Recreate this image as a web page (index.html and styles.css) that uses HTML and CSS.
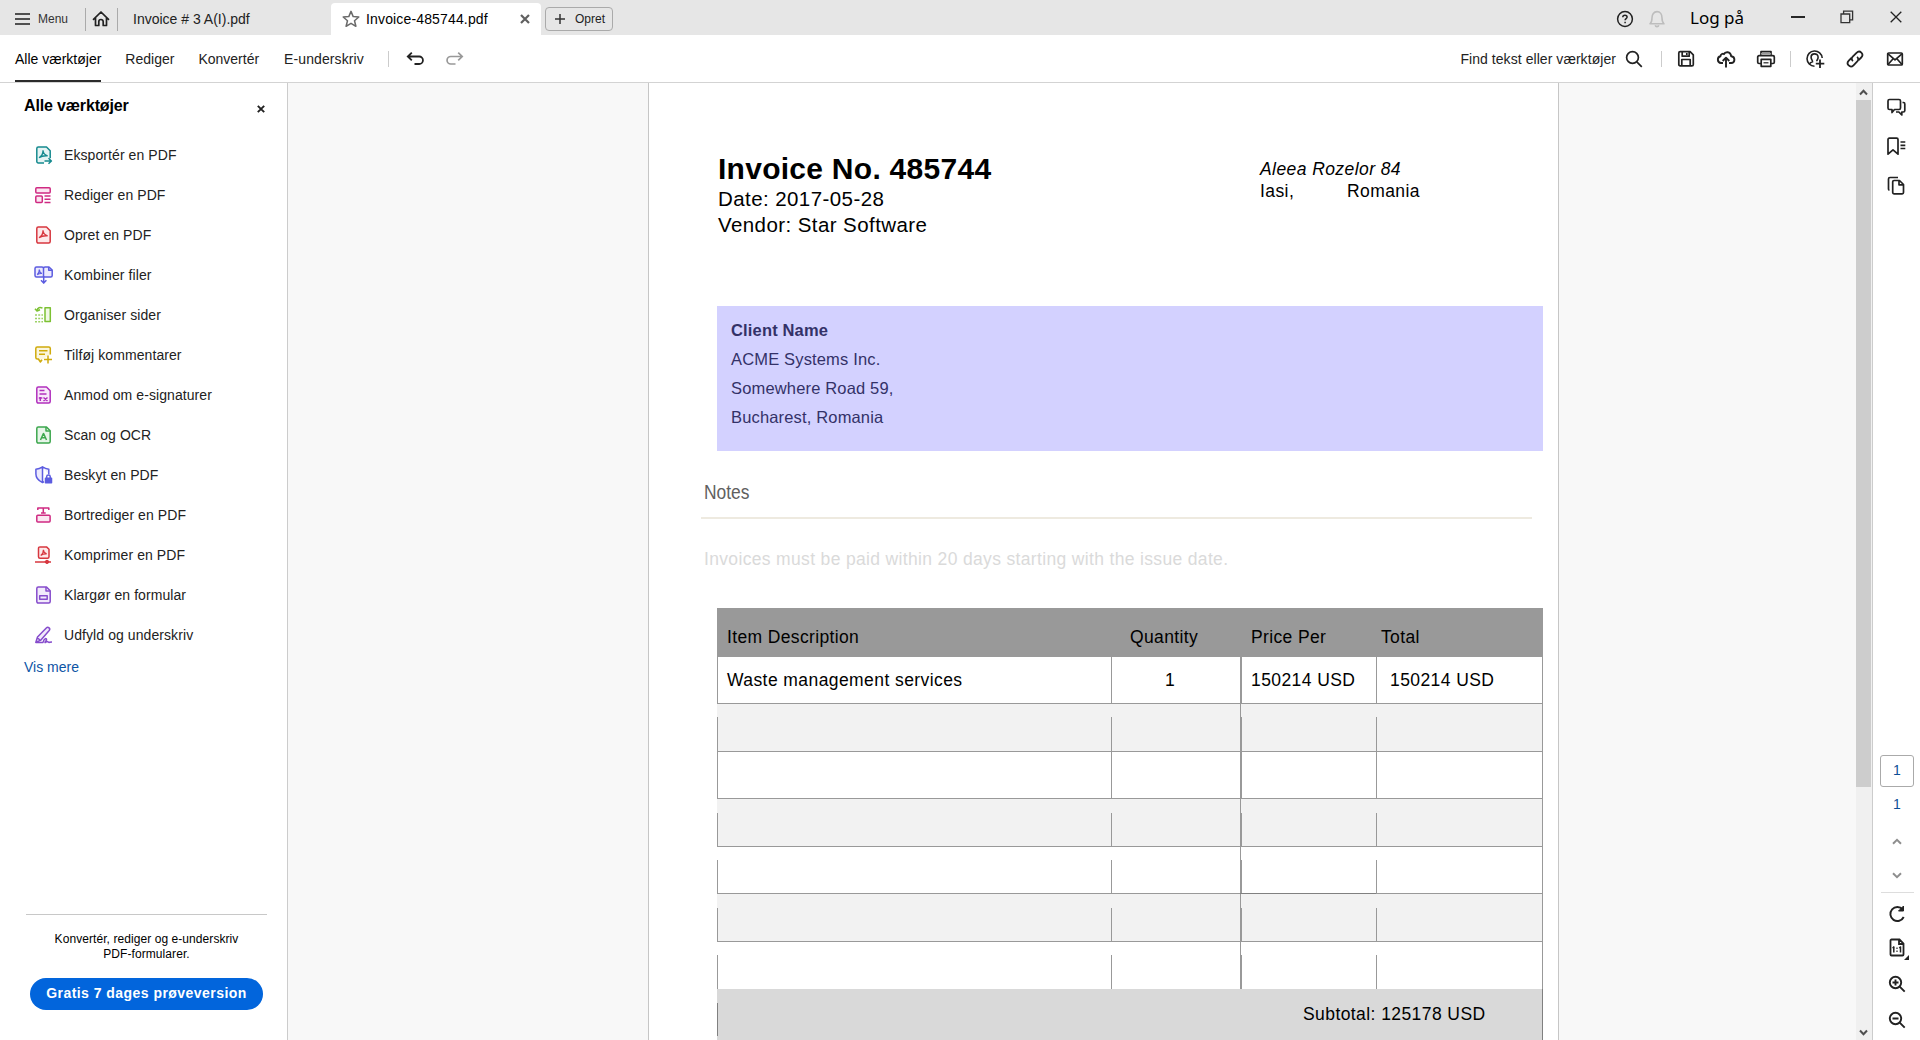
FILE: index.html
```html
<!DOCTYPE html>
<html lang="da">
<head>
<meta charset="utf-8">
<title>Invoice-485744.pdf</title>
<link rel="stylesheet" href="styles.css">
</head>
<body>
<svg class="defs" width="0" height="0" aria-hidden="true">
  <symbol id="doc" viewBox="0 0 18 18"><path d="M3.3.9h8.2l3.7 3.8v10.9a1.5 1.5 0 0 1-1.5 1.5H3.3a1.5 1.5 0 0 1-1.5-1.5V2.4A1.5 1.5 0 0 1 3.3.9z"/></symbol>
  <symbol id="acro" viewBox="0 0 18 18"><path fill="none" stroke-width="1.300" d="M8 4.200c.2 3.200 1.800 4.900 4.700 5.600M4 11.700C6.800 10 8.200 7.800 8 4.200M4 11.700c2.500-1.700 5.200-2.200 8.700-1.900"/></symbol>
</svg>
<div class="app">
  <header class="titlebar">
    <button class="menu"><svg width="15" height="12" viewBox="0 0 15 12"><path d="M0 1h15M0 6h15M0 11h15" stroke="#505050" stroke-width="1.800"/></svg>Menu</button>
    <span class="bar"></span>
    <svg class="home" width="18" height="18" viewBox="0 0 18 18" fill="none" stroke="#222" stroke-width="1.700" stroke-linejoin="round" stroke-linecap="round"><path d="M1.500 9.300 9 2l7.500 7.300M3.500 8v7.500h3.300v-3.800a2.200 2.200 0 0 1 4.400 0v3.800h3.300V8"/></svg>
    <span class="bar"></span>
    <div class="tab">Invoice # 3 A(I).pdf</div>
    <div class="tab active">
      <svg width="18" height="18" viewBox="0 0 18 18" fill="none" stroke="#6a6a6a" stroke-width="1.500" stroke-linejoin="round"><path d="m9 1.400 2.200 5.200 5.600.4-4.300 3.700 1.400 5.600L9 13.300l-4.900 3 1.400-5.600L1.200 7l5.600-.4z"/></svg>
      <span>Invoice-485744.pdf</span>
      <svg class="close" width="10" height="10" viewBox="0 0 10 10"><path d="m1 1 8 8M9 1 1 9" stroke="#606060" stroke-width="2.200"/></svg>
    </div>
    <button class="create"><svg width="10" height="10" viewBox="0 0 10 10"><path d="M5 0v10M0 5h10" stroke="#333" stroke-width="1.500"/></svg>Opret</button>
    <div class="window">
      <svg width="18" height="18" viewBox="0 0 18 18" fill="none" stroke="#222" stroke-width="1.500"><circle cx="9" cy="9" r="7.400"/><path d="M6.800 7.200c0-2.600 4.300-2.500 4.300-.1 0 1.500-2 1.500-2 3.200M9.100 11.700v1.600"/></svg>
      <svg class="bell" width="18" height="18" viewBox="0 0 18 18" fill="none" stroke="#bdbdbd" stroke-width="1.600" stroke-linejoin="round"><path d="M2 13.800c1.600-1.200 2-2.500 2-6C4 4.500 5.800 1.600 9 1.600s5 2.900 5 6.200c0 3.500.4 4.800 2 6z"/><path d="M7.200 15.300c.5 1.800 3.100 1.800 3.600 0"/></svg>
      <span class="login">Log på</span>
      <svg class="min" width="14" height="14" viewBox="0 0 14 14"><path d="M0 7h14" stroke="#111" stroke-width="1.800"/></svg>
      <svg class="restore" width="14" height="14" viewBox="0 0 14 14" fill="none" stroke="#333" stroke-width="1.300"><path d="M1 4h8.700v8.700H1zM3.600 4V1.200h9v8.700H9.700"/></svg>
      <svg width="12" height="12" viewBox="0 0 12 12"><path d="m.7.7 10.600 10.600M11.300.7.7 11.300" stroke="#222" stroke-width="1.300"/></svg>
    </div>
  </header>

  <nav class="toolbar">
    <a class="current">Alle værktøjer</a><a>Rediger</a><a>Konvertér</a><a class="sign">E-underskriv</a>
    <span class="sep"></span>
    <svg class="undo" width="18" height="14" viewBox="0 0 18 14" fill="none" stroke="#222" stroke-width="1.800"><path d="M2 4.500h11.200a3.700 3.700 0 0 1 0 7.500H8.500M5.800.7 1.800 4.500l4 3.800"/></svg>
    <svg class="redo" width="18" height="14" viewBox="0 0 18 14" fill="none" stroke="#999" stroke-width="1.700"><path d="M16 4.500H4.800a3.700 3.700 0 0 0 0 7.500h4.700M12.200.7l4 3.800-4 3.800"/></svg>
    <div class="actions">
      <span class="find">Find tekst eller værktøjer</span>
      <svg class="search" width="18" height="18" viewBox="0 0 18 18" fill="none" stroke="#222" stroke-width="1.700"><circle cx="7.500" cy="7.500" r="5.900"/><path d="m11.800 11.800 5 5"/></svg>
      <span class="sep"></span>
      <i><svg width="18" height="18" viewBox="0 0 18 18" fill="none" stroke="#222" stroke-width="1.700" stroke-linejoin="round"><path d="M1.800 3.100c0-.8.6-1.400 1.400-1.400h9.900l3.200 3.100v9.600c0 .8-.6 1.400-1.400 1.400H3.200c-.8 0-1.400-.6-1.400-1.400zM5.200 2v4.200h7V2M4.800 15.500v-6h8.400v6M9.800 3v2"/></svg></i>
      <i><svg width="20" height="18" viewBox="0 0 20 18" fill="none" stroke="#222" stroke-width="1.900" stroke-linejoin="round"><path d="M7 13H5a3.400 3.400 0 0 1-.5-6.700C4.600 4 7 3.200 8 4.200 9 1.600 14.500.8 15.200 6.300c4.300.4 4.200 6.700 0 6.700H13M10 17.500V8M6.700 11 10 7.700l3.300 3.300"/></svg></i>
      <i><svg width="20" height="18" viewBox="0 0 20 18" fill="none" stroke="#222" stroke-width="1.700" stroke-linejoin="round"><path d="M5 13.500H3a1.300 1.300 0 0 1-1.300-1.300V7A1.300 1.300 0 0 1 3 5.700h14A1.300 1.300 0 0 1 18.300 7v5.200a1.300 1.300 0 0 1-1.300 1.300h-2M5 5.500V1.700h10v3.800M5.200 9.300h9.600v7H5.200z"/><path d="M7.500 12.800h5" stroke-width="1.200"/><path d="M5 3.800h10" stroke="#999"/></svg></i>
      <span class="sep"></span>
      <i><svg width="20" height="20" viewBox="0 0 20 20" fill="none" stroke="#222" stroke-width="1.600"><path d="M9.500 17.200A7.600 7.600 0 1 1 17.200 9"/><path d="M4.500 15.300c.4-1.600 1.500-2.100 3-2.500.2-1.700-1.400-2.200-1.400-4.600 0-4.500 7-4.500 7 0 0 2.300-1.300 2.600-1.300 4"/><path d="M15 10.500v8.500M10.800 14.700h8.500" stroke-width="1.800"/></svg></i>
      <i><svg width="18" height="18" viewBox="0 0 18 18" fill="none" stroke="#222" stroke-width="1.800"><path d="M6.900 11.200c-1.600-1.500-1.400-3.300-.2-4.500l3.800-3.900c3.300-3.300 8 1.300 4.700 4.700l-2.600 2.600"/><path d="M11.100 6.900c1.600 1.500 1.400 3.300.2 4.500l-3.800 3.900c-3.300 3.300-8-1.300-4.700-4.700l2.600-2.600"/></svg></i>
      <i><svg width="18" height="16" viewBox="0 0 18 16" fill="none" stroke="#222" stroke-width="1.700" stroke-linejoin="round"><rect x="1.700" y="2" width="14.600" height="12" rx="1"/><path d="m2 2.800 7 6 7-6M2 13.500l4.900-5.500M16 13.500l-4.900-5.500"/></svg></i>
    </div>
  </nav>

  <main class="workspace">
    <aside class="sidebar">
      <div class="side-head"><h2>Alle værktøjer</h2><svg width="8" height="8" viewBox="0 0 8 8"><path d="m.8.8 6.400 6.400M7.200.8.8 7.200" stroke="#222" stroke-width="1.900"/></svg></div>
      <ul class="tools">
        <li class="teal"><svg viewBox="0 0 18 18"><path d="M9 17H3.300a1.500 1.500 0 0 1-1.500-1.500V2.400A1.500 1.500 0 0 1 3.300.9h8.200l3.700 3.800v7.500"/><use href="#acro"/><path class="n" d="M9.500 15h6.500M13.500 12.300l2.900 2.700-2.900 2.700"/></svg>Eksportér en PDF</li>
        <li class="pink"><svg viewBox="0 0 18 18"><rect x=".8" y="1.700" width="14.400" height="5.300" rx="1"/><rect x=".8" y="10" width="6.500" height="6.500" rx="1"/><path class="n" d="M9.500 10h6M9.500 13.200h6M9.500 16.400h6"/></svg>Rediger en PDF</li>
        <li class="red"><svg viewBox="0 0 18 18"><use href="#doc"/><use href="#acro"/></svg>Opret en PDF</li>
        <li class="blue"><svg viewBox="0 0 18 18"><path d="M8.500 11V2.500c0-1-.5-1.500-1.500-1.500H1.500C.5 1 0 1.500 0 2.500v7c0 1 .5 1.500 1.500 1.500zM8.500 11V2.500C8.500 1.500 9 1 10 1h4l3.200 3v5.500c0 1-.5 1.500-1.500 1.500z"/><path class="n" d="M13.700 1v3.300H17M8.700 10v7M6 14.300l2.700 2.800 2.700-2.800"/><path class="n thin" d="M4.300 3.500c.1 2.500 1.200 3.500 2.700 4M2.200 8.700c1.500-1.200 2.200-3 2.100-5.200M2.200 8.700c1.300-.9 2.800-1.300 4.800-1.200"/></svg>Kombiner filer</li>
        <li class="green"><svg viewBox="0 0 18 18"><rect x="10" y="1.800" width="5.300" height="13.700"/><path class="n" d="M7.500 2.200C5 .8 2.500 1.500 2 4.500M0 2.700 2 5l3-1.200"/><path class="n" stroke-dasharray="2 1.200" opacity=".75" d="M0 9h8M0 12.500h8M0 15.800h8"/></svg>Organiser sider</li>
        <li class="gold"><svg viewBox="0 0 18 18"><path d="M7 13.800 5.400 16l-2-3H2.300C1.300 13 .8 12.500.8 11.500v-9c0-1 .5-1.500 1.500-1.500h11.500c1 0 1.500.5 1.500 1.500v6"/><path class="n" d="M4 4.800h8.500M4 8.300h6M13 9.500v8M9 13.500h8"/></svg>Tilføj kommentarer</li>
        <li class="purple"><svg viewBox="0 0 18 18"><use href="#doc"/><path class="n" d="M4.500 4.500h5M4.500 8h7M5.300 11v4M8.500 11.500l4 3.500M12.500 11.500l-4 3.500M3.800 12h3.500"/></svg>Anmod om e-signaturer</li>
        <li class="forest"><svg viewBox="0 0 18 18"><use href="#doc"/><path class="n" d="M11 1v4h4M5.500 14 8.400 7.500h.2l2.900 6.500M6.500 11.700h4"/></svg>Scan og OCR</li>
        <li class="blue"><svg viewBox="0 0 18 18"><path d="M7.500.9c2 1.300 4 2 6.300 2.300v5M9 15.700l-1.500.9C3 14.500.9 11.500.9 8V3.200C3.300 3 5.500 2.200 7.500.9v15.700"/><path class="solid" d="M10.500 12.200h6v4.600h-6z"/><path class="n" d="M11.700 12v-1.500c0-1.900 3.500-1.900 3.500 0V12"/></svg>Beskyt en PDF</li>
        <li class="pink"><svg viewBox="0 0 18 18"><rect x="1.800" y="9.300" width="13.300" height="6.800" rx="1"/><path class="n" d="M2.800 4V2h11v2M8.300 2v5M6 7h4.700"/></svg>Bortrediger en PDF</li>
        <li class="red"><svg viewBox="0 0 18 18"><path d="M5 .9h6.500L14 3.300v7.500c0 1-.5 1.500-1.500 1.500H5c-1 0-1.500-.5-1.500-1.500V2.400C3.500 1.400 4 .9 5 .9z"/><path class="n thin" d="M8.400 3.700c.1 2.400 1.300 3.600 3.300 4.200M5.700 9.400c1.900-1.200 2.800-3 2.700-5.700M5.700 9.400c1.700-1.200 3.500-1.600 6-1.500"/><path class="n" d="M0 15.900h16M12 14.300l-2 1.600 2 1.600M12 14.300l2 1.600-2 1.600"/></svg>Komprimer en PDF</li>
        <li class="violet"><svg viewBox="0 0 18 18"><use href="#doc"/><path class="n" d="M11 1v4h4M4.700 9.700h7.500v3.600H4.700z"/></svg>Klargør en formular</li>
        <li class="violet"><svg viewBox="0 0 18 18"><path d="M.8 16.400 2.500 11 11.300 2c1.800-1.800 4.500.5 2.900 2.500l-8.500 9.800zM2 11.500l3.500 3"/><path class="n" d="M1 16.400h7c1-4.500 4-4.500 3.500-2.500-.2 1-1.700 2-1.500 2.500s2-.9 2.500-.9 1 .9 1.500.9 1-.5 3-.5"/></svg>Udfyld og underskriv</li>
      </ul>
      <a class="more">Vis mere</a>
      <div class="promo">
        <p>Konvertér, rediger og e-underskriv<br>PDF-formularer.</p>
        <button>Gratis 7 dages prøveversion</button>
      </div>
    </aside>

    <section class="viewer">
      <article class="page">
        <div class="head">
          <div class="title"><h1>Invoice No. 485744</h1><p>Date: 2017-05-28</p><p>Vendor: Star Software</p></div>
          <address><em>Aleea Rozelor 84</em><div><span>Iasi,</span><span>Romania</span></div></address>
        </div>
        <div class="client"><b>Client Name</b><span>ACME Systems Inc.</span><span>Somewhere Road 59,</span><span>Bucharest, Romania</span></div>
        <h3 class="notes"><span>Notes</span></h3>
        <p class="terms">Invoices must be paid within 20 days starting with the issue date.</p>
        <div class="items">
          <div class="row th"><span>Item Description</span><span>Quantity</span><span>Price Per</span><span>Total</span></div>
          <div class="row first"><span>Waste management services</span><span>1</span><span>150214 USD</span><span>150214 USD</span></div>
          <div class="row tall shade gap"><span></span><span></span><span></span><span></span></div>
          <div class="row"><span></span><span></span><span></span><span></span></div>
          <div class="row tall shade gap deep"><span></span><span></span><span></span><span></span></div>
          <div class="row gap"><span></span><span></span><span class="dark"></span><span></span></div>
          <div class="row tall shade gap deep"><span></span><span></span><span></span><span></span></div>
          <div class="row gap last"><span></span><span></span><span></span><span></span></div>
          <div class="subtotal">Subtotal: 125178 USD</div>
        </div>
      </article>
      <div class="scroll">
        <svg width="9" height="7" viewBox="0 0 9 7"><path d="m1 5.500 3.500-3.700L8 5.500" fill="none" stroke="#505050" stroke-width="2"/></svg>
        <span class="thumb"></span>
        <svg class="down" width="9" height="7" viewBox="0 0 9 7"><path d="m1 1.500 3.500 3.700L8 1.500" fill="none" stroke="#505050" stroke-width="2"/></svg>
      </div>
    </section>

    <aside class="rail">
      <div class="panels">
        <svg width="19" height="19" viewBox="0 0 19 19" fill="none" stroke="#222" stroke-width="1.700" stroke-linejoin="round"><path d="M2.500 1.500h9.500c1 0 1.500.5 1.500 1.500v7c0 1-.5 1.500-1.500 1.500H7.500L5 14.500v-3H2.500C1.500 11.500 1 11 1 10V3c0-1 .5-1.500 1.500-1.500z"/><path d="M15.500 4.500h1c1 0 1.300.5 1.300 1.500v6.500c0 1-.5 1.500-1.500 1.500h-1.500v3l-2.900-3H9"/></svg>
        <svg width="19" height="19" viewBox="0 0 19 19" fill="none" stroke="#222" stroke-width="1.700" stroke-linejoin="round"><path d="M1 2.500C1 1.700 1.500 1.200 2.300 1.200h7.400c.8 0 1.300.5 1.300 1.300v14.700L6 12.800l-5 4.400zM13.500 5h4.800M13.500 8.300h4.800M13.500 11.500h4.800"/></svg>
        <svg width="19" height="19" viewBox="0 0 19 19" fill="none" stroke="#222" stroke-width="1.700" stroke-linejoin="round"><path d="M2.500 14C1.800 14 1.500 13.500 1.500 12.800V3c0-1 .5-1.500 1.500-1.500h8M7 4.500h5.500l4 4v8c0 .8-.4 1.300-1.300 1.300H7c-.9 0-1.300-.5-1.300-1.300V5.800C5.700 5 6.100 4.500 7 4.500zM12 4.800v4h4.300"/></svg>
      </div>
      <div class="nav">
        <span class="pageno box">1</span>
        <span class="pageno">1</span>
        <svg class="up" width="10" height="7" viewBox="0 0 10 7"><path d="M1 5.700 5 1.800l4 3.900" fill="none" stroke="#8e8e8e" stroke-width="2"/></svg>
        <svg class="dn" width="10" height="7" viewBox="0 0 10 7"><path d="m1 1.300 4 3.900 4-3.900" fill="none" stroke="#8e8e8e" stroke-width="2"/></svg>
        <hr>
        <svg width="18" height="18" viewBox="0 0 18 18" fill="none" stroke="#222" stroke-width="1.900"><path d="M14.700 4.500A7 7 0 1 0 15.700 12"/><path d="M15.500 1v5h-5z" fill="#222" stroke-width="1"/></svg>
        <svg class="fit" width="20" height="22" viewBox="0 0 20 22" fill="none" stroke="#222" stroke-width="1.800"><path d="M2.500 1.500h8l4 4v11a1 1 0 0 1-1 1h-11a1 1 0 0 1-1-1v-14a1 1 0 0 1 1-1zM10 2v4h4"/><path d="M4.800 8.500v6M11.500 8.500v6" stroke-width="1.500"/><path d="M3.500 10 5 8.800M10.200 10l1.500-1.200M8 9.500v1.500M8 12.500V14" stroke-width="1.200"/><path d="M20 17v5h-5z" fill="#222" stroke="none"/></svg>
        <svg width="18" height="18" viewBox="0 0 18 18" fill="none" stroke="#222" stroke-width="1.900"><circle cx="7.500" cy="7.500" r="5.700"/><path d="m11.700 11.700 5 5M7.500 4.500v6M4.500 7.500h6"/></svg>
        <svg width="18" height="18" viewBox="0 0 18 18" fill="none" stroke="#222" stroke-width="1.900"><circle cx="7.500" cy="7.500" r="5.700"/><path d="m11.700 11.700 5 5M4.500 7.500h6"/></svg>
      </div>
    </aside>
  </main>
</div>
</body>
</html>
```

FILE: styles.css
```css
* { box-sizing: border-box; margin: 0; padding: 0; }
body { font: 14px/20px "Liberation Sans", Arial, sans-serif; color: #222; background: #fff; overflow: hidden; }
.defs { position: absolute; }
svg { display: block; flex: none; }
button { font: inherit; color: inherit; border: 0; background: none; }
ul { list-style: none; }
.app { width: 1920px; height: 1040px; display: flex; flex-direction: column; overflow: hidden; white-space: nowrap; }

/* Title bar */
.titlebar { height: 35px; flex: none; background: #e6e6e6; display: flex; align-items: center; padding: 3px 18px 0 15px; }
.menu { display: flex; align-items: center; gap: 8px; width: 70px; font-size: 12px; color: #333; }
.bar { width: 1px; height: 23px; background: #aaa; }
.home { margin: 0 7px 0 6px; }
.tab { width: 213px; height: 32px; padding-left: 15px; line-height: 32px; }
.tab.active { width: 210px; background: #fff; border-radius: 4px 4px 0 0; display: flex; align-items: center; padding-left: 11px; color: #000; letter-spacing: .15px; }
.tab.active span { margin-left: 6px; width: 154px; }
.create { display: flex; align-items: center; gap: 10px; margin-left: 4px; width: 68px; height: 24px; padding-left: 9px; border: 1px solid #aaa; border-radius: 4px; font-size: 12px; }
.window { margin-left: auto; display: flex; align-items: center; }
.bell { margin-left: 14px; }
.login { margin: -2px 46px 0 24px; width: 55px; font: 17px/24px "Noto Sans", sans-serif; color: #000; }
.min { margin-top: -5px; }
.restore { margin: -4px 36px 0 35px; }
.window > svg:last-child { margin-top: -4px; }

/* Toolbar */
.toolbar { height: 48px; flex: none; display: flex; align-items: center; border-bottom: 1px solid #d3d3d3; padding: 0 5px 0 15px; }
.toolbar a { height: 47px; line-height: 48px; margin-right: 24px; }
.toolbar a.current { border-bottom: 2px solid #2b2b2b; color: #000; }
.toolbar a.sign { margin-left: 1px; letter-spacing: .1px; }
.sep { width: 1px; height: 16px; background: #ccc; }
.undo { margin-left: 17px; }
.redo { margin-left: 22px; }
.actions { margin-left: auto; display: flex; align-items: center; }
.find { letter-spacing: .06px; }
.search { margin: 1px 14px 0 9px; }
.actions i { width: 40px; display: flex; justify-content: center; }
.actions .sep { margin: 0 4px; }

/* Left panel */
.workspace { flex: 1; min-height: 0; display: flex; }
.sidebar { width: 288px; border-right: 1px solid #ccc; display: flex; flex-direction: column; }
.side-head { display: flex; justify-content: space-between; padding: 13px 22px 0 24px; height: 52px; }
.side-head h2 { font-size: 16px; line-height: 20px; letter-spacing: -.15px; color: #000; }
.side-head svg { margin-top: 9px; }
.tools { padding-left: 35px; }
.tools li { height: 40px; display: flex; align-items: center; gap: 11px; letter-spacing: .08px; }
.tools svg { width: 18px; height: 18px; fill: var(--f); stroke: var(--c); stroke-width: 1.5; stroke-linejoin: round; overflow: visible; }
.tools .n { fill: none; }
.tools .thin { stroke-width: 1.2; }
.tools .solid { fill: var(--c); }
.teal { --c: #168a8f; --f: #e6f4f4; }
.pink { --c: #cf2a82; --f: #fbe6f1; }
.red { --c: #d7373f; --f: #fde9ea; }
.blue { --c: #5c5ce0; --f: #eceafd; }
.green { --c: #7cc133; --f: #f1f9e6; }
.gold { --c: #d0ab0c; --f: #fbf6df; }
.purple { --c: #b130bd; --f: #f8e8fa; }
.forest { --c: #3da74e; --f: #e7f5e9; }
.violet { --c: #864ccc; --f: #f1eafb; }
.more { margin: 2px 0 0 24px; color: #0d55a5; }
.promo { margin: auto 20px 0 26px; height: 126px; border-top: 1px solid #c8c8c8; padding-top: 17px; text-align: center; }
.promo p { font-size: 12px; line-height: 15px; color: #000; letter-spacing: .07px; }
.promo button { margin-top: 16px; width: 233px; height: 32px; border-radius: 16px; background: #0265dc; color: #fff; font-weight: bold; letter-spacing: .46px; line-height: 30px; padding-bottom: 2px; }

/* Document */
.viewer { flex: 1; background: #f8f8f8; display: flex; overflow: hidden; }
.page { margin-left: 360px; width: 911px; background: #fff; border: solid #c6c6c6; border-width: 0 1px; padding: 68px 15px 0 52px; font-size: 17.5px; line-height: 22px; letter-spacing: .42px; color: #000; }
.head { height: 155px; display: flex; padding-left: 17px; }
.title { width: 542px; font-size: 20.5px; line-height: 26px; }
.title h1 { font-size: 30px; line-height: 35px; letter-spacing: .27px; }
address { font-style: normal; padding-top: 7px; }
address em { display: block; }
address div { display: grid; grid-template-columns: 87px auto; }
.client { margin-left: 16px; height: 145px; background: #d3d1ff; color: #333168; padding: 10px 14px; display: flex; flex-direction: column; font-size: 16.5px; line-height: 29px; letter-spacing: .16px; }
.notes { margin: 29px 11px 0 0; padding-left: 3px; height: 39px; border-bottom: 2px solid #eeeae0; font-size: 20px; line-height: 24px; font-weight: normal; letter-spacing: 0; color: #606060; }
.notes span { display: inline-block; transform: scaleX(.87); transform-origin: 0 0; }
.terms { margin: 29px 0 38px 3px; color: #dadada; letter-spacing: .34px; }
.items { margin-left: 16px; }
.row { display: grid; grid-template-columns: 394px 129px 136px 167px; height: 47px; border-right: 1px solid #999; border-bottom: 1px solid #999; }
.row span { --gap: 0px; background: linear-gradient(#999, #999) 0 100% / 1px calc(100% - var(--gap)) no-repeat; }
.row:not(.th) span:nth-child(3) { border-left: 1px solid #999; }
.row.tall { height: 48px; }
.row.shade { background: #f2f2f2; }
.row.gap span { --gap: 13px; }
.row.deep span { --gap: 14px; }
.row.last { border-bottom: 0; }
.row .dark { box-shadow: 0 1px #808080; }
.row.th { height: 49px; background: #999; padding-top: 18px; border: 0; letter-spacing: .36px; }
.row.first span { padding-top: 12px; }
.row span:first-child { padding-left: 10px; }
.th span:nth-child(2) { padding-left: 19px; }
.th span:nth-child(3) { padding-left: 11px; }
.th span:nth-child(4) { padding-left: 5px; }
.first span:nth-child(2) { padding-left: 54px; }
.first span:nth-child(3) { padding-left: 10px; }
.first span:nth-child(4) { padding-left: 14px; }
.subtotal { height: 51px; padding: 14px 0 0 586px; border-right: 1px solid #808080; background: linear-gradient(#808080, #808080) 0 14px / 1px 33px no-repeat #d9d9d9; }

.scroll { margin-left: auto; width: 17px; background: #f0f0f0; border-right: 1px solid #ccc; display: flex; flex-direction: column; }
.scroll svg { margin: 6px 0 4px 3px; }
.thumb { width: 15px; height: 687px; background: #cdcdcd; }
.scroll .down { margin: auto 0 4px 3px; }

/* Right rail */
.rail { width: 47px; display: flex; flex-direction: column; justify-content: space-between; }
.panels { display: flex; flex-direction: column; gap: 20px; padding: 15px 0 0 14px; }
.nav { display: flex; flex-direction: column; align-items: center; height: 285px; padding-left: 1px; }
.pageno { width: 34px; height: 32px; line-height: 29px; text-align: center; color: #0d4f96; }
.pageno.box { border: 1px solid #aaa; border-radius: 3px; margin-bottom: 3px; line-height: 28px; }
.up { margin-top: 16px; }
.dn { margin-top: 27px; }
.nav hr { width: 33px; height: 1px; border: 0; background: #ddd; margin: 13px 0 12px; flex: none; }
.nav svg.fit { margin: 15px 0 15px 4px; }
.nav svg:last-child { margin-top: 18px; }
```
